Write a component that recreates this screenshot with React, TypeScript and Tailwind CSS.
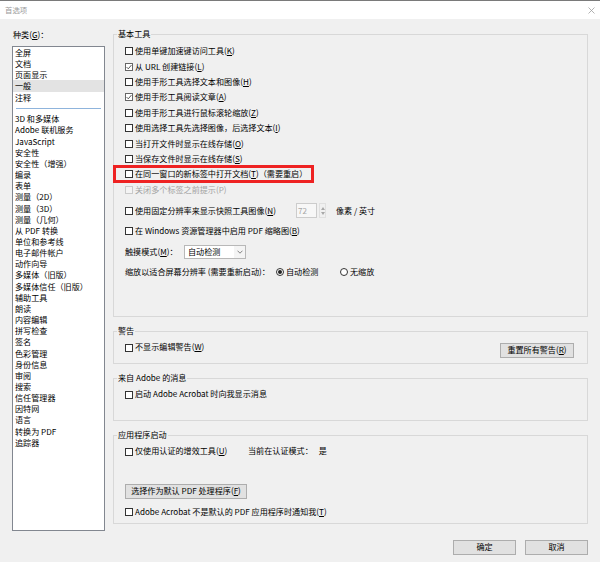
import React from "react";

const list1 = ["全屏", "文档", "页面显示", "一般", "注释"];
const list2 = [
  "3D 和多媒体",
  "Adobe 联机服务",
  "JavaScript",
  "安全性",
  "安全性（增强）",
  "编录",
  "表单",
  "测量（2D）",
  "测量（3D）",
  "测量（几何）",
  "从 PDF 转换",
  "单位和参考线",
  "电子邮件帐户",
  "动作向导",
  "多媒体（旧版）",
  "多媒体信任（旧版）",
  "辅助工具",
  "朗读",
  "内容编辑",
  "拼写检查",
  "签名",
  "色彩管理",
  "身份信息",
  "审阅",
  "搜索",
  "信任管理器",
  "因特网",
  "语言",
  "转换为 PDF",
  "追踪器",
];

function Box({ checked, disabled }: { checked?: boolean; disabled?: boolean }) {
  const cls = disabled
    ? "w-[8px] h-[8px] shrink-0 border border-[#cacaca] bg-[#f4f4f4] flex items-center justify-center"
    : checked
    ? "w-[8px] h-[8px] shrink-0 border border-[#666666] bg-white flex items-center justify-center"
    : "w-[8px] h-[8px] shrink-0 border border-[#333333] bg-white flex items-center justify-center";
  return (
    <span className={cls}>
      {checked && (
        <svg width="6" height="6" viewBox="0 0 6 6">
          <path d="M0.6 3.1 L2.3 4.8 L5.4 1.1" fill="none" stroke="#444" strokeWidth="0.9" />
        </svg>
      )}
    </span>
  );
}

function Acc({ k }: { k: string }) {
  return (
    <>
      (<span className="underline underline-offset-[1px] decoration-[0.6px]">{k}</span>)
    </>
  );
}

function Check({
  children,
  checked,
  disabled,
  h = "h-[15.4px]",
}: {
  children: React.ReactNode;
  checked?: boolean;
  disabled?: boolean;
  h?: string;
}) {
  return (
    <div className={`flex items-center ${h}`}>
      <Box checked={checked} disabled={disabled} />
      <span className={disabled ? "ml-[2px] text-[#a3a3a3] whitespace-nowrap" : "ml-[2px] whitespace-nowrap"}>
        {children}
      </span>
    </div>
  );
}

function Radio({ on }: { on?: boolean }) {
  return (
    <span className="w-[8px] h-[8px] shrink-0 rounded-full border border-[#333333] bg-white flex items-center justify-center">
      {on && <span className="w-[4px] h-[4px] rounded-full bg-[#222222]" />}
    </span>
  );
}

function GroupLabel({ children }: { children: React.ReactNode }) {
  return (
    <div className="-mt-[7px] ml-[3px] px-[1px] self-start bg-[#f0f0f0] leading-[12px] h-[12px] whitespace-nowrap">
      {children}
    </div>
  );
}

function Btn({ children, w }: { children: React.ReactNode; w: string }) {
  return (
    <div
      className={`${w} h-[15px] bg-[#e1e1e1] border border-[#adadad] flex items-center justify-center whitespace-nowrap`}
    >
      {children}
    </div>
  );
}

export default function App() {
  return (
    <div className="w-[600px] h-[562px] bg-[#f0f0f0] flex flex-col text-[8.1px] text-black font-['Noto_Sans_CJK_SC','Noto_Sans',sans-serif] overflow-hidden">
      {/* title bar */}
      <div className="h-[19px] shrink-0 bg-white border-t border-[#7a7a7a] flex items-center justify-between pl-[5px] pr-[5px]">
        <span className="text-[7.4px] text-[#9a9a9a] leading-none">首选项</span>
        <svg width="7" height="7" viewBox="0 0 7 7">
          <path d="M0.5 0.5 L6.5 6.5 M6.5 0.5 L0.5 6.5" stroke="#a0a0a0" strokeWidth="0.8" />
        </svg>
      </div>

      {/* body */}
      <div className="flex items-start pl-[12px] gap-[8px]">
        {/* left */}
        <div className="w-[93px] pt-[10px] flex flex-col">
          <div className="h-[12px] leading-[12px] pl-[1px]">
            种类<Acc k="G" />：
          </div>
          <div className="mt-[5px] h-[485px] bg-white border border-[#828790] flex flex-col">
            {list1.map((t, i) => (
              <div
                key={t}
                className={
                  i === 3
                    ? "h-[11.17px] leading-[11.17px] pl-[2px] bg-[#e3e3e3] whitespace-nowrap"
                    : "h-[11.17px] leading-[11.17px] pl-[2px] whitespace-nowrap"
                }
              >
                {i === 2 ? (
                  <>
                    <span className="border-b border-[#3a7bd5]">页面</span>显示
                  </>
                ) : (
                  t
                )}
              </div>
            ))}
            <div className="mt-[5.6px] mx-[3px] h-[1px] bg-[#8fb4dc]" />
            <div className="mt-[3.9px] flex flex-col">
              {list2.map((t) => (
                <div key={t} className="h-[11.17px] leading-[11.17px] pl-[2px] whitespace-nowrap">
                  {t}
                </div>
              ))}
            </div>
          </div>
        </div>

        {/* right */}
        <div className="w-[475px] pt-[15px] flex flex-col">
          {/* group 1 */}
          <div className="h-[283px] border border-[#d8d8d8] flex flex-col">
            <GroupLabel>基本工具</GroupLabel>
            <div className="pl-[11px] mt-[3.6px] flex flex-col">
              <Check>
                使用单键加速键访问工具<Acc k="K" />
              </Check>
              <Check checked>
                从 URL 创建链接<Acc k="L" />
              </Check>
              <Check>
                使用手形工具选择文本和图像<Acc k="H" />
              </Check>
              <Check checked>
                使用手形工具阅读文章<Acc k="A" />
              </Check>
              <Check>
                使用手形工具进行鼠标滚轮缩放<Acc k="Z" />
              </Check>
              <Check>
                使用选择工具先选择图像，后选择文本<Acc k="I" />
              </Check>
              <Check>
                当打开文件时显示在线存储<Acc k="O" />
              </Check>
              <Check>
                当保存文件时显示在线存储<Acc k="S" />
              </Check>
              <div className="relative">
                <Check>
                  在同一窗口的新标签中打开文档<Acc k="T" />（需要重启）
                </Check>
                <div className="absolute left-[-12px] top-[-1.8px] w-[201px] h-[18.4px] border-[3px] border-[#ee2222] pointer-events-none" />
              </div>
              <Check disabled>关闭多个标签之前提示(P)</Check>

              <div className="mt-[3px] flex items-center h-[20.5px]">
                <div className="w-[171px] shrink-0">
                  <Check h="h-[15px]">
                    使用固定分辨率来显示快照工具图像<Acc k="N" />
                  </Check>
                </div>
                <div className="w-[21px] h-[15px] border border-[#cccccc] bg-[#f7f7f7] text-[#a8a8a8] pl-[1px] leading-[13px]">
                  72
                </div>
                <div className="ml-[2px] w-[7px] h-[15px] border border-[#e0e0e0] flex flex-col items-center justify-center gap-[2px]">
                  <svg width="4" height="3" viewBox="0 0 4 3">
                    <path d="M0 3 L2 0 L4 3 Z" fill="#a8a8a8" />
                  </svg>
                  <svg width="4" height="3" viewBox="0 0 4 3">
                    <path d="M0 0 L2 3 L4 0 Z" fill="#a8a8a8" />
                  </svg>
                </div>
                <span className="ml-[10px] whitespace-nowrap">像素 / 英寸</span>
              </div>
              <Check h="h-[20.5px]">
                在 Windows 资源管理器中启用 PDF 缩略图<Acc k="B" />
              </Check>
              <div className="flex items-center h-[20.5px]">
                <span className="w-[59px] shrink-0 whitespace-nowrap">
                  触摸模式<Acc k="M" />：
                </span>
                <div className="w-[62px] h-[14px] border border-[#b8b8b8] bg-white flex items-center">
                  <span className="flex-1 pl-[3px] leading-[12px] whitespace-nowrap">自动检测</span>
                  <span className="w-[11px] h-full bg-[#f4f4f4] flex items-center justify-center">
                    <svg width="6" height="4" viewBox="0 0 6 4">
                      <path d="M0.5 0.7 L3 3.2 L5.5 0.7" fill="none" stroke="#666" strokeWidth="0.8" />
                    </svg>
                  </span>
                </div>
              </div>
              <div className="flex items-center h-[20.5px]">
                <span className="w-[151px] shrink-0 whitespace-nowrap">缩放以适合屏幕分辨率 (需要重新启动)：</span>
                <div className="w-[64px] flex items-center">
                  <Radio on />
                  <span className="ml-[2px]">自动检测</span>
                </div>
                <div className="flex items-center">
                  <Radio />
                  <span className="ml-[2px]">无缩放</span>
                </div>
              </div>
            </div>
          </div>

          {/* group 2 */}
          <div className="mt-[14px] h-[33px] border border-[#d8d8d8] flex flex-col">
            <GroupLabel>警告</GroupLabel>
            <div className="pl-[11px] pr-[13px] flex justify-between items-start">
              <div className="mt-[3px]">
                <Check h="h-[15px]">
                  不显示编辑警告<Acc k="W" />
                </Check>
              </div>
              <div className="mt-[6px]">
                <Btn w="w-[74px]">
                  重置所有警告<Acc k="R" />
                </Btn>
              </div>
            </div>
          </div>

          {/* group 3 */}
          <div className="mt-[14px] h-[43px] border border-[#d8d8d8] flex flex-col">
            <GroupLabel>来自 Adobe 的消息</GroupLabel>
            <div className="pl-[11px] mt-[3px]">
              <Check h="h-[15px]">启动 Adobe Acrobat 时向我显示消息</Check>
            </div>
          </div>

          {/* group 4 */}
          <div className="mt-[14px] h-[89px] border border-[#d8d8d8] flex flex-col">
            <GroupLabel>应用程序启动</GroupLabel>
            <div className="pl-[11px] flex flex-col">
              <div className="mt-[3px] flex items-center h-[15px]">
                <div className="w-[123px] shrink-0">
                  <Check h="h-[15px]">
                    仅使用认证的增效工具<Acc k="U" />
                  </Check>
                </div>
                <span className="whitespace-nowrap">当前在认证模式：</span>
                <span className="ml-[6px]">是</span>
              </div>
              <div className="mt-[25px]">
                <Btn w="w-[122px]">
                  选择作为默认 PDF 处理程序<Acc k="F" />
                </Btn>
              </div>
              <div className="mt-[5.5px]">
                <Check h="h-[15px]">
                  Adobe Acrobat 不是默认的 PDF 应用程序时通知我<Acc k="T" />
                </Check>
              </div>
            </div>
          </div>

          {/* bottom buttons */}
          <div className="mt-[16px] flex justify-end gap-[9px]">
            <Btn w="w-[63px]">确定</Btn>
            <Btn w="w-[63px]">取消</Btn>
          </div>
        </div>
      </div>
    </div>
  );
}
